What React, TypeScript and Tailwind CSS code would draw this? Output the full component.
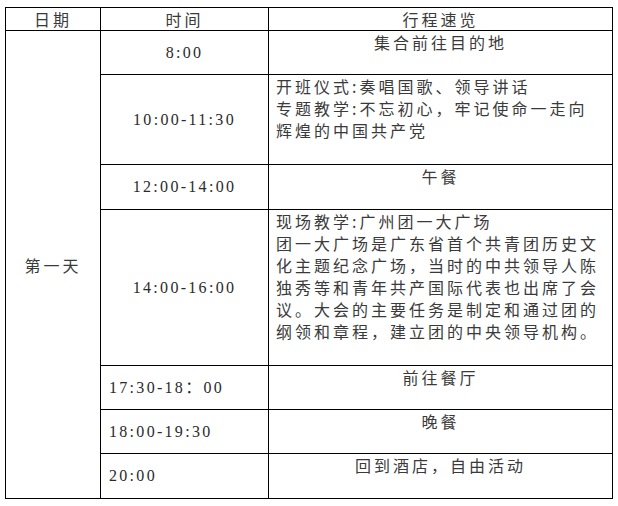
const cn = "font-['Noto_Sans_CJK_SC',sans-serif] text-[16px] tracking-[3px] leading-[22px] text-[#3a3a3a]";
const digits = "font-['Liberation_Serif','Noto_Sans_CJK_SC',serif] text-[16px] tracking-[2.3px] text-[#2a2a2a]";

type Item = {
  time: string;
  timeAlign: "center" | "left";
  lines: string[];
  height: string;
};

const items: Item[] = [
  { time: "8:00", timeAlign: "center", lines: ["集合前往目的地"], height: "h-[44px]" },
  {
    time: "10:00-11:30",
    timeAlign: "center",
    lines: ["开班仪式:奏唱国歌、领导讲话", "专题教学:不忘初心，牢记使命一走向", "辉煌的中国共产党"],
    height: "h-[90px]",
  },
  { time: "12:00-14:00", timeAlign: "center", lines: ["午餐"], height: "h-[45px]" },
  {
    time: "14:00-16:00",
    timeAlign: "center",
    lines: [
      "现场教学:广州团一大广场",
      "团一大广场是广东省首个共青团历史文",
      "化主题纪念广场，当时的中共领导人陈",
      "独秀等和青年共产国际代表也出席了会",
      "议。大会的主要任务是制定和通过团的",
      "纲领和章程，建立团的中央领导机构。",
    ],
    height: "h-[156px]",
  },
  { time: "17:30-18：00", timeAlign: "left", lines: ["前往餐厅"], height: "h-[44px]" },
  { time: "18:00-19:30", timeAlign: "left", lines: ["晚餐"], height: "h-[44px]" },
  { time: "20:00", timeAlign: "left", lines: ["回到酒店，自由活动"], height: "h-[45px]" },
];

export default function App() {
  return (
    <div className="w-[618px] h-[506px] bg-white pt-[7px] pl-[5px]">
      <table className="table-fixed border-collapse w-[607px]">
        <colgroup>
          <col className="w-[95px]" />
          <col className="w-[168px]" />
          <col className="w-[344px]" />
        </colgroup>
        <thead>
          <tr className="h-[23px]">
            <th className={`border border-black font-normal p-0 text-center align-middle ${cn}`}>日期</th>
            <th className={`border border-black font-normal p-0 text-center align-middle ${cn}`}>时间</th>
            <th className={`border border-black font-normal p-0 text-center align-middle ${cn}`}>行程速览</th>
          </tr>
        </thead>
        <tbody>
          {items.map((it, i) => (
            <tr key={i} className={it.height}>
              {i === 0 && (
                <td rowSpan={items.length} className={`border border-black p-0 text-center align-middle ${cn}`}>
                  第一天
                </td>
              )}
              <td
                className={`border border-black p-0 align-middle whitespace-nowrap ${digits} ${
                  it.timeAlign === "center" ? "text-center" : "text-left pl-[8px]"
                }`}
              >
                {it.time}
              </td>
              <td
                className={`border border-black align-top p-0 ${cn} ${
                  it.lines.length > 1 ? "text-left pl-[7px]" : "text-center"
                }`}
              >
                {it.lines.map((l, j) => (
                  <div key={j} className="whitespace-nowrap">
                    {l}
                  </div>
                ))}
              </td>
            </tr>
          ))}
        </tbody>
      </table>
    </div>
  );
}
